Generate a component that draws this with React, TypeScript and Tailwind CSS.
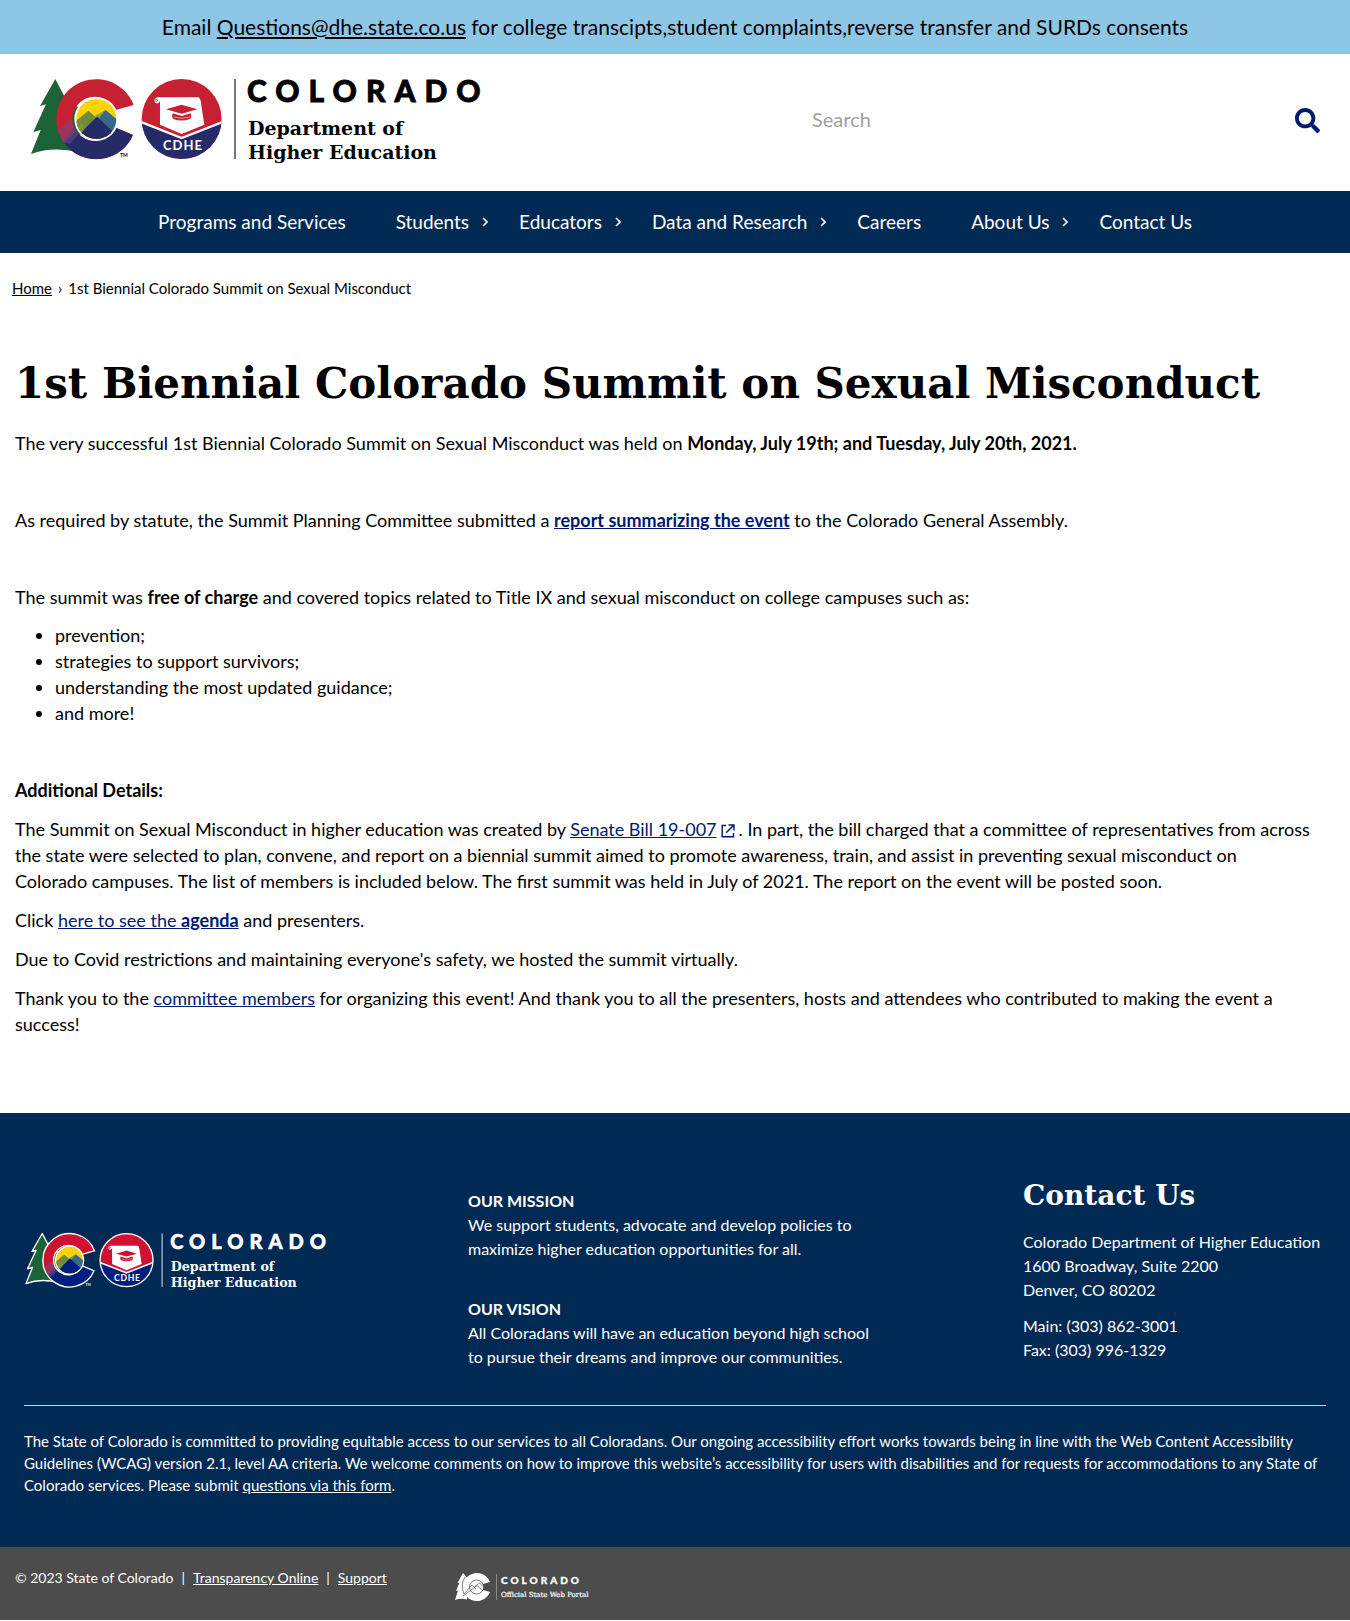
import React from "react";
import { FaSearch } from "react-icons/fa";

const navItems = [
  { label: "Programs and Services", menu: false },
  { label: "Students", menu: true },
  { label: "Educators", menu: true },
  { label: "Data and Research", menu: true },
  { label: "Careers", menu: false },
  { label: "About Us", menu: true },
  { label: "Contact Us", menu: false },
];

function Chevron() {
  return (
    <svg viewBox="0 0 6 10" className="absolute right-1.5 top-1/2 h-2.5 w-1.5 -translate-y-1/2" fill="none" stroke="currentColor" strokeWidth="1.6" aria-hidden="true">
      <path d="M1 1l4 4-4 4" />
    </svg>
  );
}

function ExternalIcon() {
  return (
    <svg viewBox="0 0 14 14" className="mx-1 inline-block h-3.5 w-3.5 align-[-2px]" fill="none" stroke="currentColor" strokeWidth="1.4" aria-hidden="true">
      <path d="M5 1.5H1.2v11.3h11.3V9M7.500 1h5.500v5.500M13 1L5.200 8.800" />
    </svg>
  );
}

function Logo({ dark = false, className }: { dark?: boolean; className: string }) {
  const ink = dark ? "#ffffff" : "#000000";
  const red = dark ? "#cf1233" : "#c62033";
  const navy = dark ? "#001e7e" : "#252a68";
  const edge = dark ? "#ffffff" : "none";
  return (
    <svg viewBox="0 0 472 88" className={className} role="img" aria-label="Colorado Department of Higher Education">
      <defs>
        <clipPath id={dark ? "sun-d" : "sun-l"}><circle cx="229" cy="147" r="60" /></clipPath>
        <clipPath id={dark ? "seal-d" : "seal-l"}><circle cx="485" cy="147" r="120" /></clipPath>
        <clipPath id={dark ? "c-d" : "c-l"}>
          <path d="M341 105A120 120 0 1 0 339 195L284 172A66 66 0 1 1 284 121Z" />
        </clipPath>
      </defs>
      <g transform="translate(-8 -7) scale(0.3333)">
        <path d="M106 27L60 108L78 103L40 186L62 180L33 252Q100 228 175 247L190 120L140 92Z" fill="#1c6338" stroke={edge} strokeWidth="6" strokeLinejoin="round" />
        <g clipPath={dark ? "url(#c-d)" : "url(#c-l)"}>
          <rect x="100" y="20" width="260" height="250" fill={red} />
          <path d="M130 217L172 172L360 160V280H100Z" fill={navy} />
          <path d="M100 192L148 150L172 150L172 180L133 220L110 215Z" fill="#8a3f6a" opacity="0.7" />
          <path d="M130 217L166 165L180 172L176 192L150 222Z" fill="#584582" opacity="0.7" />
        </g>
        <path d="M341 105A120 120 0 1 0 339 195L284 172A66 66 0 1 1 284 121Z" fill="none" stroke={edge} strokeWidth="6" />
        <circle cx="229" cy="147" r="66" fill="#fff" />
        <g clipPath={dark ? "url(#sun-d)" : "url(#sun-l)"}>
          <rect x="160" y="80" width="140" height="140" fill="#fed304" />
          <path d="M160 160L205 122L240 152L210 200H150Z" fill="#6f8a3c" />
          <path d="M220 150L257 120L300 156V200H220Z" fill="#356a8c" />
          <path d="M224 138L257 120L236 146Z" fill="#8da23a" />
          <path d="M175 194L231 140L290 194V220H160Z" fill={navy} />
          <path d="M160 165L178 152L198 172L180 195Z" fill="#7c8f3a" />
        </g>
        <g clipPath={dark ? "url(#seal-d)" : "url(#seal-l)"}>
          <rect x="360" y="20" width="250" height="250" fill={red} />
          <path d="M360 155L485 204L610 155V280H360Z" fill={navy} />
          <path d="M360 155L485 204L610 155" fill="none" stroke="#fff" strokeWidth="7" />
        </g>
        {dark && <circle cx="485" cy="147" r="119" fill="none" stroke="#fff" strokeWidth="6" />}
        <path d="M412 82H535Q541 84 542 92L553 164L485 192L420 164V94Q414 104 406 98Q398 88 412 82Z" fill="#fff" />
        <path d="M406 89Q412 86 413 92Q410 97 406 93" fill="none" stroke={red} strokeWidth="3" />
        <path d="M485 104L532 118L485 131L438 118Z" fill={red} />
        <path d="M458 130L485 138L512 130Q516 142 510 147Q485 156 460 147Q454 142 458 130Z" fill={red} />
        <path d="M461 141Q485 149 509 141" fill="none" stroke="#fff" strokeWidth="1.5" />
      </g>
      <text x="135" y="73" fontFamily="Lato, sans-serif" fontWeight="700" fontSize="13" letterSpacing="1" fill="#fff">CDHE</text>
      <text x="92" y="80" fontFamily="Lato, sans-serif" fontWeight="700" fontSize="5" fill={ink}>TM</text>
      <rect x="206" y="2" width="2" height="80" fill={dark ? "#a9b8c8" : "#77787b"} />
      <text x="219" y="25" fontFamily="Lato, sans-serif" fontWeight="900" fontSize="30" letterSpacing="9" fill={ink} stroke={ink} strokeWidth="0.8">COLORADO</text>
      <text x="220" y="58" fontFamily="DejaVu Serif, serif" fontWeight="700" fontSize="19" fill={ink}>Department of</text>
      <text x="220" y="82" fontFamily="DejaVu Serif, serif" fontWeight="700" fontSize="19" fill={ink}>Higher Education</text>
    </svg>
  );
}

function PortalLogo() {
  return (
    <svg viewBox="0 0 140 30" className="h-[30px] w-[140px]" role="img" aria-label="Colorado Official State Web Portal">
      <path d="M8 1L2.500 11L4.500 10.500L1 19L3 18.500L0 28Q6 26 12 27.500L14 8Z" fill="#fff" />
      <path d="M35 10A14 14 0 1 0 35 20L28 18A7 7 0 1 1 28 12Z" fill="#fff" />
      <circle cx="21.500" cy="15" r="7" fill="#fff" />
      <g fill="none" stroke="#4c4c4c" strokeWidth="0.7">
        <circle cx="21.500" cy="15" r="7" />
        <path d="M10 5Q5 13 9 22L17 13L21 17M8 24L22 13.500L28 19M19.500 15L24.500 11L28 14.500" />
      </g>
      <rect x="41" y="2" width="1" height="26" fill="#8a8a8a" />
      <text x="46" y="12" fontFamily="Lato, sans-serif" fontWeight="900" fontSize="10" letterSpacing="3" fill="#fff" stroke="#fff" strokeWidth="0.3">COLORADO</text>
      <text x="46" y="25" fontFamily="DejaVu Serif, serif" fontWeight="400" fontSize="7" fill="#fff" stroke="#fff" strokeWidth="0.2">Official State Web Portal</text>
    </svg>
  );
}

const link = "text-[#001970] underline";

export default function App() {
  return (
    <div className="bg-white font-[Lato,sans-serif] text-black">
      <div className="bg-[#8ec6e6] py-3 text-center text-[21px] leading-[30px]">
        Email <a href="mailto:Questions@dhe.state.co.us" className="underline">Questions@dhe.state.co.us</a> for college transcipts,student complaints,reverse transfer and SURDs consents
      </div>

      <header className="flex h-[137px] items-start justify-between pl-7 pr-[30px]">
        <a href="#home" className="mt-[23px]">
          <Logo className="h-[88px] w-[472px]" />
        </a>
        <form className="mt-[50px] flex w-[508px] items-center" onSubmit={(e) => e.preventDefault()}>
          <input type="search" aria-label="Search" placeholder="Search" className="h-8 min-w-0 flex-1 pb-0.5 text-xl outline-none placeholder:text-[#a0a0a0]" />
          <button type="submit" aria-label="Submit search" className="text-[#001970]">
            <FaSearch size={25} />
          </button>
        </form>
      </header>

      <nav className="bg-[#002a53] text-white">
        <ul className="flex h-[62px] items-center justify-center">
          {navItems.map((item) => (
            <li key={item.label} className="relative px-[25px]">
              <a href="#nav" className="block text-[19px] leading-7">{item.label}</a>
              {item.menu && <Chevron />}
            </li>
          ))}
        </ul>
      </nav>

      <nav aria-label="Breadcrumb" className="flex gap-1.5 px-3 pb-0.5 pt-[23px] text-[15px] leading-6">
        <a href="#home" className="underline">Home</a>
        <span>›</span>
        <span>1st Biennial Colorado Summit on Sexual Misconduct</span>
      </nav>

      <main className="px-[15px] pb-[76px] pt-[52px] text-lg leading-[26px]">
        <h1 className="mb-4 font-[DejaVu_Serif,serif] text-[42px] font-bold leading-[60px]">1st Biennial Colorado Summit on Sexual Misconduct</h1>
        <p className="mb-[51px]">
          The very successful 1st Biennial Colorado Summit on Sexual Misconduct was held on <strong>Monday, July 19th; and Tuesday, July 20th, 2021.</strong>
        </p>
        <p className="mb-[51px]">
          As required by statute, the Summit Planning Committee submitted a <a href="#report" className={link}><strong>report summarizing the event</strong></a> to the Colorado General Assembly.
        </p>
        <p className="mb-3">
          The summit was <strong>free of charge</strong> and covered topics related to Title IX and sexual misconduct on college campuses such as:
        </p>
        <ul className="mb-[51px] list-disc pl-10">
          <li>prevention;</li>
          <li>strategies to support survivors;</li>
          <li>understanding the most updated guidance;</li>
          <li>and more!</li>
        </ul>
        <p className="mb-[13px]"><strong>Additional Details:</strong></p>
        <p className="mb-[13px]">
          The Summit on Sexual Misconduct in higher education was created by <a href="#bill" className="text-[#001970]"><span className="underline">Senate Bill 19-007</span><ExternalIcon /></a>. In part, the bill charged that a committee of representatives from across the state were selected to plan, convene, and report on a biennial summit aimed to promote awareness, train, and assist in preventing sexual misconduct on Colorado&nbsp;campuses. The list of members is included below. The first summit was held in July of 2021. The report on the event will be posted soon.
        </p>
        <p className="mb-[13px]">
          Click <a href="#agenda" className={link}>here to see the <strong>agenda</strong></a> and presenters.
        </p>
        <p className="mb-[13px]">Due to Covid restrictions and maintaining everyone's safety, we hosted the summit virtually.</p>
        <p>
          Thank you to the <a href="#members" className={link}>committee members</a> for organizing this event! And thank you to all the presenters, hosts and attendees who contributed to making the event a success!
        </p>
      </main>

      <footer>
        <div className="bg-[#002a53] px-6 pb-[51px] pt-[64px] text-white">
          <div className="flex text-base leading-6">
            <div className="w-[444px] pt-[55px]">
              <Logo dark className="h-[59px] w-[315px]" />
            </div>
            <div className="w-[555px] pt-3">
              <h2 className="font-bold">OUR MISSION</h2>
              <p>We support students, advocate and develop policies to<br />maximize higher education opportunities for all.</p>
              <h2 className="mt-9 font-bold">OUR VISION</h2>
              <p>All Coloradans will have an education beyond high school<br />to pursue their dreams and improve our communities.</p>
            </div>
            <div className="flex-1 whitespace-nowrap">
              <h2 className="mb-[15px] font-[DejaVu_Serif,serif] text-[28px] font-bold leading-[38px]">Contact Us</h2>
              <p className="mb-3">Colorado Department of Higher Education<br />1600 Broadway, Suite 2200<br />Denver, CO 80202</p>
              <p>Main: (303) 862-3001<br />Fax: (303) 996-1329</p>
            </div>
          </div>
          <hr className="mb-6 mt-9 border-[#c9d2dc]" />
          <p className="text-[15px] leading-[22px]">
            The State of Colorado is committed to providing equitable access to our services to all Coloradans. Our ongoing accessibility effort works towards being in line with the Web Content Accessibility Guidelines (WCAG) version 2.1, level AA criteria. We welcome comments on how to improve this website’s accessibility for users with disabilities and for requests for accommodations to any State of Colorado services. Please submit <a href="#form" className="underline">questions via this form</a>.
          </p>
        </div>
        <div className="flex h-[73px] bg-[#4c4c4c] px-[15px] text-sm text-white">
          <p className="flex w-[440px] gap-2 pt-5 leading-[22px]">
            <span>© 2023 State of Colorado</span>
            <span>|</span>
            <a href="#transparency" className="underline">Transparency Online</a>
            <span>|</span>
            <a href="#support" className="underline">Support</a>
          </p>
          <a href="#portal" className="pt-[25px]"><PortalLogo /></a>
        </div>
      </footer>
    </div>
  );
}
